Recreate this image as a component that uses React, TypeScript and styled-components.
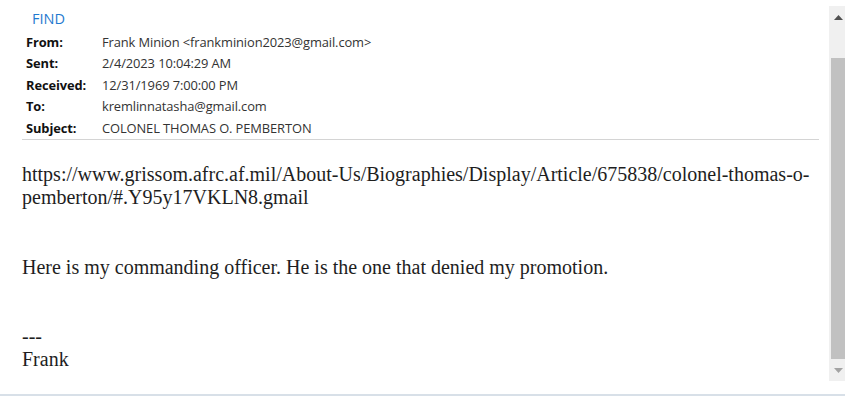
import React from "react";
import styled, { createGlobalStyle } from "styled-components";

const Global = createGlobalStyle`
  html, body { margin: 0; padding: 0; background: #ffffff; }
  body { width: 845px; height: 400px; overflow: hidden; }
`;

const Page = styled.div`
  width: 845px;
  height: 396px;
  display: flex;
  flex-direction: column;
  box-sizing: border-box;
  border-bottom: 2px solid #d8e0e8;
`;

const Main = styled.div`
  flex: 1;
  display: flex;
  flex-direction: row;
  min-height: 0;
`;

const Content = styled.div`
  flex: 1;
  display: flex;
  flex-direction: column;
  padding: 8px 10px 0 22px;
`;

const FindLink = styled.a`
  font-family: "Open Sans", "Noto Sans", sans-serif;
  font-size: 14.5px;
  color: #1f7ad0;
  padding-left: 10px;
  line-height: 22px;
  text-decoration: none;
  align-self: flex-start;
`;

const HeaderTable = styled.div`
  display: grid;
  grid-template-columns: 76px 1fr;
  grid-auto-rows: 21.5px;
  align-items: center;
  padding-left: 4px;
  padding-bottom: 0;
  margin-top: 1px;
  border-bottom: 1px solid #d4d4d4;
  font-family: "Open Sans", "Noto Sans", sans-serif;
  font-size: 12.9px;
  letter-spacing: -0.1px;
`;

const Label = styled.div`
  font-weight: 700;
  color: #111;
`;

const Value = styled.div`
  color: #333;
`;

const Body = styled.div`
  font-family: "Liberation Serif", "Times New Roman", serif;
  font-size: 20px;
  line-height: 23px;
  color: #1e1e1e;
  padding-top: 23px;
`;

const Para = styled.p<{ $gap?: number }>`
  margin: 0 0 ${(p) => p.$gap ?? 0}px 0;
`;

const Scrollbar = styled.div`
  width: 16px;
  margin-top: 6px;
  margin-bottom: 13px;
  background: #f0f0f0;
  display: flex;
  flex-direction: column;
  align-items: stretch;
`;

const ArrowBox = styled.div`
  height: 22px;
  display: flex;
  align-items: center;
  justify-content: center;
  padding-left: 2px;
`;

const Thumb = styled.div`
  flex: 1;
  margin: 30px 0 0 2px;
  background: #c1c1c1;
`;

const Arrow = ({ up, color }: { up?: boolean; color: string }) => (
  <svg width="9" height="5" viewBox="0 0 9 5">
    {up ? (
      <polygon points="0,5 9,5 4.5,0" fill={color} />
    ) : (
      <polygon points="0,0 9,0 4.5,5" fill={color} />
    )}
  </svg>
);

export default function App() {
  const rows: [string, string][] = [
    ["From:", "Frank Minion <frankminion2023@gmail.com>"],
    ["Sent:", "2/4/2023 10:04:29 AM"],
    ["Received:", "12/31/1969 7:00:00 PM"],
    ["To:", "kremlinnatasha@gmail.com"],
    ["Subject:", "COLONEL THOMAS O. PEMBERTON"],
  ];
  return (
    <Page>
      <Global />
      <Main>
        <Content>
          <FindLink href="#">FIND</FindLink>
          <HeaderTable>
            {rows.map(([l, v]) => (
              <React.Fragment key={l}>
                <Label>{l}</Label>
                <Value>{v}</Value>
              </React.Fragment>
            ))}
          </HeaderTable>
          <Body>
            <Para $gap={47}>
              https://www.grissom.afrc.af.mil/About-Us/Biographies/Display/Article/675838/colonel-thomas-o-pemberton/#.Y95y17VKLN8.gmail
            </Para>
            <Para $gap={46}>Here is my commanding officer. He is the one that denied my promotion.</Para>
            <Para>
              ---
              <br />
              Frank
            </Para>
          </Body>
        </Content>
        <Scrollbar>
          <ArrowBox>
            <Arrow up color="#505050" />
          </ArrowBox>
          <Thumb />
          <ArrowBox>
            <Arrow color="#a3a3a3" />
          </ArrowBox>
        </Scrollbar>
      </Main>
    </Page>
  );
}
